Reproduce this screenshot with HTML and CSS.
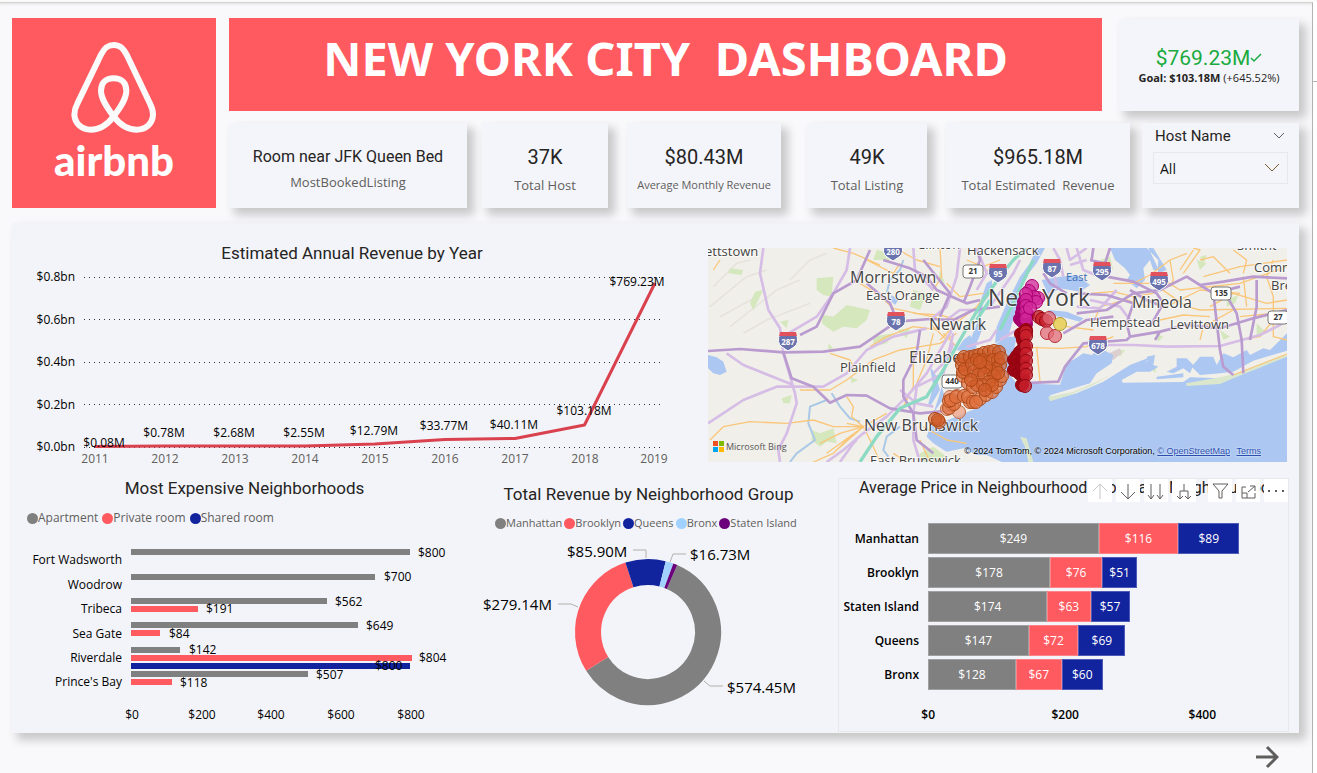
FILE: index.html
```html
<!DOCTYPE html>
<html lang="en">
<head>
<meta charset="utf-8">
<meta name="viewport" content="width=device-width, initial-scale=1">
<title>New York City Dashboard</title>
<link rel="stylesheet" href="styles.css">
</head>
<body>
<div class="frame">
<div class="page">
  <header class="top">
    <div class="brand">
      <svg class="brand-mark" viewBox="210 125 264 280" aria-hidden="true"><path d="M341 139C320 139 311 152 303 168L232 315C224 330 223 342 223 348C225 375 245 393 273 393C300 393 322 378 341 353C362 325 379 300 379 276C379 252 364 239 341 239C318 239 303 252 303 276C303 300 320 325 341 353C360 378 382 393 410 393C438 393 458 375 459 348C459 335 455 325 450 315L380 168C371 152 362 139 341 139Z"/></svg>
      <span class="brand-name">airbnb</span>
    </div>
    <div class="top-main">
      <div class="title-row">
        <h1 class="banner">NEW YORK CITY  DASHBOARD</h1>
        <section class="card goal">
          <p class="goal-value">$769.23M<svg viewBox="0 0 12 10" aria-hidden="true"><path d="M1 5l3 3 7-7"/></svg></p>
          <p class="goal-note"><b>Goal: $103.18M</b> (+645.52%)</p>
        </section>
      </div>
      <div class="kpis">
        <section class="card kpi kpi-text"><p class="kpi-value">Room near JFK Queen Bed</p><p class="kpi-label">MostBookedListing</p></section>
        <section class="card kpi hosts"><p class="kpi-value">37K</p><p class="kpi-label">Total Host</p></section>
        <section class="card kpi monthly"><p class="kpi-value">$80.43M</p><p class="kpi-label">Average Monthly Revenue</p></section>
        <section class="card kpi listings"><p class="kpi-value">49K</p><p class="kpi-label">Total Listing</p></section>
        <section class="card kpi estimated"><p class="kpi-value">$965.18M</p><p class="kpi-label">Total Estimated  Revenue</p></section>
        <section class="card filter">
          <div class="filter-head"><label for="host">Host Name</label><button type="button" class="plain" aria-label="Collapse"><svg width="12" height="8" viewBox="0 0 12 8"><path d="M1 1l5 5 5-5"/></svg></button></div>
          <div class="picker"><select id="host"><option>All</option></select><svg width="16" height="10" viewBox="0 0 16 10" aria-hidden="true"><path d="M1 1l7 7 7-7"/></svg></div>
        </section>
      </div>
    </div>
  </header>

  <main class="card panel">
    <div class="row-one">
      <section class="trend">
        <h2>Estimated Annual Revenue by Year</h2>
        <svg class="chart" viewBox="12 265 696 208" role="img" aria-label="Revenue by year">
          <g class="grid"><path d="M84 277.500H663M84 319.500H663M84 362.500H663M84 404.500H663M84 447.500H663"/></g>
          <path class="line" d="M95 446.500L165 446L235 446L305 446L375 444L445 439.500L515 438.500L584.500 425L655 283"/>
          <g class="lbl end"><text x="75" y="281">$0.8bn</text><text x="75" y="324">$0.6bn</text><text x="75" y="366">$0.4bn</text><text x="75" y="409">$0.2bn</text><text x="75" y="451">$0.0bn</text></g>
          <g class="lbl mid"><text x="104" y="447">$0.08M</text><text x="164" y="437">$0.78M</text><text x="234" y="437">$2.68M</text><text x="304" y="437">$2.55M</text><text x="374" y="435">$12.79M</text><text x="444" y="430">$33.77M</text><text x="514" y="429">$40.11M</text><text x="584" y="415">$103.18M</text><text x="637" y="286">$769.23M</text></g>
          <g class="lbl mid soft"><text x="95" y="463">2011</text><text x="165" y="463">2012</text><text x="235" y="463">2013</text><text x="305" y="463">2014</text><text x="375" y="463">2015</text><text x="445" y="463">2016</text><text x="515" y="463">2017</text><text x="585" y="463">2018</text><text x="654" y="463">2019</text></g>
        </svg>
      </section>
      <section class="map">
        <svg viewBox="0 0 579 214" role="img" aria-label="Map of listings around New York">
          <rect class="land" width="579" height="214"/>
          <g transform="translate(-8 -8) scale(0.33333)">
            <g class="ridge"><path d="M30 200L140 110L200 90M60 230L170 170M90 260L230 150L300 120M40 140L110 70L150 60M130 280L200 240L330 190M270 120L330 60L380 40"/></g>
            <g class="park">
              <path d="M350 115L400 110L395 170L370 165L350 150ZM165 155L190 150L160 210L150 190ZM370 225L400 230L440 195L510 210L500 240L470 265L430 260L400 275L365 250ZM90 85L130 90L125 105L85 100ZM240 245L265 240L260 265ZM335 570L360 580L400 565L410 610L380 605L360 620L335 600ZM245 475L275 465L270 490L250 490ZM640 150L680 160L660 210L630 200ZM520 290L580 280L560 310L520 320ZM590 270L630 265L620 295ZM530 30L570 40L575 60L520 60ZM385 310L400 325L385 330ZM720 90L735 130L715 120ZM660 640L700 620L740 650L700 666L650 666ZM450 410L475 420L455 430ZM700 590L720 600L700 610Z"/>
              <path d="M1200 60L1230 50L1240 90ZM1490 60L1520 70L1500 90ZM1560 270L1590 290L1570 300ZM1670 250L1700 280L1670 285ZM1350 380L1370 380L1365 400ZM1100 370L1120 380L1110 400ZM1580 180L1615 165L1605 190L1580 200ZM1365 280L1390 290L1375 305ZM1170 350L1190 375L1180 400L1165 380ZM1250 330L1275 330L1260 350ZM1500 50L1520 45L1510 75Z"/>
            </g>
            <path class="field" d="M1215 345L1260 325L1265 340L1240 360Z"/>
            <g class="water">
              <path d="M680 590L690 560L720 550L830 505L900 450L905 400L880 350L890 310L920 290L950 290L940 340L925 400L950 430L1080 434L1100 372L1150 340L1175 345L1200 325L1240 345L1235 370L1190 400L1170 430L1050 466L1055 480L1130 460L1210 425L1290 375L1350 352L1320 390L1265 420L1268 428L1450 426L1470 412L1560 415L1610 408L1761 348V666H905L860 645L830 645L790 625L740 635L700 610Z"/>
              <path d="M1500 405L1475 380L1500 350L1540 350L1550 375L1570 340L1600 352L1640 330L1650 345L1690 325L1710 330L1761 280V332L1660 362L1600 395L1560 400ZM1310 395L1345 360L1340 350L1365 345L1360 375L1375 380L1350 395ZM1430 355L1460 355L1480 375L1470 400L1450 385L1420 400L1400 395L1430 380Z"/>
              <path d="M1230 24L1245 60L1275 85L1290 105L1280 120L1310 145L1335 120L1330 85L1350 60L1360 90L1373 90L1375 60L1340 24ZM1360 24L1400 90L1375 100L1372 80L1345 24Z"/>
              <path d="M1025 120L1080 110L1130 105L1170 135L1140 155L1080 145L1045 165Z"/>
              <path d="M1010 24L1035 24L1010 70L970 120L950 200L925 290L885 310L890 260L920 190L960 110L990 70Z"/>
              <path d="M860 130L875 120L880 150L850 190L840 230L850 260L830 310L810 330L815 290L835 240L835 200ZM770 330L790 300L810 285L830 320L820 340ZM24 345L50 352L70 365L80 395L60 405L40 400L24 385Z"/>
              <path d="M575 165L595 180L585 195L570 180ZM895 500L870 470L910 440L970 440L980 500ZM690 500L720 450L705 400L690 380L700 440L685 490ZM725 440L735 470L700 520L715 475ZM1045 210L1100 215L1150 235L1140 245L1090 232L1045 225ZM1370 410L1450 400L1450 412L1370 418Z"/>
            </g>
            <g class="sand"><path d="M1045 470L1120 455L1190 425L1240 400L1180 435L1110 465L1050 484ZM1458 430L1560 412L1610 400L1750 345L1761 350L1600 415L1560 432L1460 438ZM960 590L980 595L990 630L1000 666H985L975 620Z"/></g>
            <g class="river"><path d="M395 460L420 500L450 535L480 545M380 480L330 500L325 550L345 600L290 640L270 666M600 560L560 590L550 630L565 650M610 60L600 90L570 120L560 160"/></g>
            <g class="minor"><path d="M30 600L70 560L150 545L260 550L340 540L400 560L490 560L440 600L400 640L340 666M40 90L60 60M500 60L580 100L600 70M585 24L650 60L720 80M300 450L390 450L440 420L520 360L600 330L720 310L770 280M440 470L460 500L455 530L490 560L520 620L540 666M400 24L460 40L540 75M480 130L530 160L580 205L650 220L720 235M510 320L560 290L640 260L720 270M490 560L420 580L360 610M490 560L410 630M490 560L380 640M490 560L440 550M720 300L750 270L770 240M640 330L640 440L610 500M560 520L490 560M720 24L725 110L700 150M390 340L450 360L470 400"/>
            <path d="M690 250L740 300L760 260M700 280L680 360L650 430M730 280L770 320M640 220L720 225L790 245M670 560L740 600L800 610M660 600L690 666M580 640L620 666M800 60L850 80L900 60M740 130L780 170L850 160M900 110L860 90M780 240L830 200L870 150"/>
            <path d="M980 322L1080 325L1160 320L1240 290M1010 320L1020 425M1050 230L1100 260L1180 270M1240 130L1360 130L1460 200L1500 210L1760 205M1360 100L1440 150L1620 130L1761 80M1450 100L1500 30L1480 24M1630 100L1640 60L1600 30M1720 60L1700 110L1720 170L1720 290L1761 300M1400 200L1500 150L1620 160M1500 300L1510 260L1600 210M1600 405L1761 342M1180 250L1200 200L1280 180L1340 200M1410 60L1420 120L1410 140"/>
            <path d="M1170 160L1240 155L1300 170L1360 160M1300 130L1350 105L1410 60L1461 40M1500 60L1540 50L1590 100M1440 90L1480 30M1510 110L1620 80L1761 60M1530 200L1600 160L1700 190L1761 180M1630 110L1640 200M1380 240L1450 225L1530 230M1620 230L1720 220M1620 300L1680 290L1720 240"/></g>
            <g class="pale"><path d="M190 24L180 100L205 210L240 265L250 340L285 460L290 490L260 580L235 630L240 666M24 550L130 480L230 440L370 440L440 400L500 330L580 290L680 265M80 340L130 375L280 435M450 24L440 90L400 160L350 230L265 280M380 666L430 630L490 580L560 530L620 470L680 400L750 280L770 240M780 24L770 110L740 200L690 240M640 24L645 90L700 150M760 280L730 400L650 440L640 520L640 600L660 666M890 270L870 300L800 320"/>
            <path d="M600 450L650 490L700 500M700 400L740 360L760 310M740 240L780 210L820 210M830 24L860 100L830 150M420 666L460 610L470 600M900 300L950 270M960 60L940 100L870 200"/>
            <path d="M1210 315L1300 315L1400 320L1560 318L1680 285L1740 255L1761 240M1130 200L1200 205L1250 150M1100 24L1110 60L1160 24M1030 60L1060 90L1070 140L1030 180M1110 75L1160 60M1060 24L1080 60L1090 110M1130 24L1150 90L1200 110M1170 180L1260 200L1290 240"/></g>
            <g class="major"><path d="M24 333L120 327L250 337L370 335L480 320L590 245L690 237L760 240L820 210L900 200M250 337L275 415L340 440L390 488L440 465L500 467L570 505L660 520L760 510M300 285L350 260L400 160L470 120L510 30M550 60L630 85L680 110L710 150L800 190L840 180M660 270L650 340L610 420L610 470L640 520L650 600L700 640M500 130L570 190L590 240M790 190L810 140L840 60L830 24M670 60L750 160L720 230"/>
            <path d="M960 430L1075 425L1095 380L1150 310L1280 300L1290 290L1380 275L1460 255L1560 265L1660 235L1761 210M1130 160L1220 165L1300 190L1280 250L1290 290M1130 220L1220 210L1300 160L1380 150L1460 110L1500 135L1570 125L1660 110L1761 115M1380 275L1365 300M1290 150L1340 180L1390 200M1230 24L1215 70L1170 60M1500 135L1540 160L1560 330L1570 380L1600 405M1570 150L1610 220L1625 300L1630 400M1540 160L1620 140M1670 120L1670 200L1650 300M1220 110L1300 125L1370 160L1390 190L1350 260M1090 280L1160 240L1240 230M1100 160L1050 130L1030 100M1180 24L1175 60"/></g>
            <g class="pike"><path d="M480 666L530 590L600 505L680 470L730 390L780 300L850 180L900 110L940 60L980 24M900 270L930 210L1000 60M830 240L870 180"/></g>
          </g>
          <g id="shields" class="shields"></g>
          <g class="place"><text x="-3" y="8">ettstown</text><text x="209" y="1">Clinton</text><text x="259" y="7">Hackensack</text><text x="529" y="2">Smitht</text><text x="546" y="24">Comm</text><text x="563" y="42">Bre</text><text x="158" y="52">East Orange</text><text x="132" y="124">Plainfield</text><text x="382" y="79">Hempstead</text><text x="462" y="81">Levittown</text><text x="162" y="217">East Brunswick</text></g>
          <g class="place town"><text x="142" y="35">Morristown</text><text x="221" y="82">Newark</text><text x="201" y="115">Elizabeth</text><text x="424" y="60">Mineola</text><text x="156" y="183">New Brunswick</text></g>
          <text class="city" x="280" y="58">New York</text>
          <text class="blue" x="358" y="33">East</text>
          <g id="dots"></g>
          <path fill="#f25022" d="M5 193h5v5H5z"/><path fill="#7fba00" d="M11 193h5v5h-5z"/><path fill="#00a4ef" d="M5 199h5v5H5z"/><path fill="#ffb900" d="M11 199h5v5h-5z"/>
          <text class="bing" x="18" y="202">Microsoft Bing</text>
        </svg>
        <p class="credits">© 2024 TomTom, © 2024 Microsoft Corporation, <a href="#osm">© OpenStreetMap</a> <a href="#terms">Terms</a></p>
      </section>
    </div>

    <div class="row-two">
      <section class="expensive">
        <h2>Most Expensive Neighborhoods</h2>
        <ul class="legend"><li class="gray">Apartment</li><li class="red">Private room</li><li class="navy">Shared room</li></ul>
        <svg class="chart" viewBox="12 530 453 203" role="img" aria-label="Price by neighborhood">
          <g class="bar-gray"><rect x="131" y="549" width="279" height="6"/><rect x="131" y="574" width="244" height="6"/><rect x="131" y="598" width="196" height="6"/><rect x="131" y="622" width="227" height="6"/><rect x="131" y="647" width="49" height="6"/><rect x="131" y="671" width="177" height="6"/></g>
          <g class="bar-red"><rect x="131" y="606" width="67" height="6"/><rect x="131" y="630" width="29" height="6"/><rect x="131" y="655" width="281" height="6"/><rect x="131" y="679" width="41" height="6"/></g>
          <g class="bar-navy"><rect x="131" y="663" width="279" height="6"/></g>
          <g class="lbl end"><text x="122" y="564">Fort Wadsworth</text><text x="122" y="589">Woodrow</text><text x="122" y="613">Tribeca</text><text x="122" y="638">Sea Gate</text><text x="122" y="662">Riverdale</text><text x="122" y="686">Prince's Bay</text></g>
          <g class="lbl"><text x="418" y="557">$800</text><text x="384" y="581">$700</text><text x="335" y="606">$562</text><text x="206" y="613">$191</text><text x="366" y="630">$649</text><text x="169" y="638">$84</text><text x="189" y="654">$142</text><text x="419" y="662">$804</text><text x="375" y="670">$800</text><text x="316" y="679">$507</text><text x="180" y="687">$118</text></g>
          <g class="lbl mid"><text x="132" y="719">$0</text><text x="202" y="719">$200</text><text x="271" y="719">$400</text><text x="341" y="719">$600</text><text x="411" y="719">$800</text></g>
        </svg>
      </section>

      <section class="share">
        <h2>Total Revenue by Neighborhood Group</h2>
        <ul class="legend small"><li class="gray">Manhattan</li><li class="red">Brooklyn</li><li class="navy">Queens</li><li class="sky">Bronx</li><li class="purple">Staten Island</li></ul>
        <svg class="chart" viewBox="465 533 373 200" role="img" aria-label="Revenue share by neighborhood group">
          <g class="ring" transform="rotate(-66.400 648 632)">
            <circle class="s-gray" cx="648" cy="632" r="60" pathLength="1000" stroke-dasharray="595.200 1000"/>
            <circle class="s-red" cx="648" cy="632" r="60" pathLength="1000" stroke-dasharray="289.200 1000" stroke-dashoffset="-595.200"/>
            <circle class="s-navy" cx="648" cy="632" r="60" pathLength="1000" stroke-dasharray="89 1000" stroke-dashoffset="-884.400"/>
            <circle class="s-sky" cx="648" cy="632" r="60" pathLength="1000" stroke-dasharray="17.300 1000" stroke-dashoffset="-973.400"/>
            <circle class="s-purple" cx="648" cy="632" r="60" pathLength="1000" stroke-dasharray="9.300 1000" stroke-dashoffset="-990.700"/>
          </g>
          <path class="leader" d="M633 550H646V558M670 562L673 554H686M558 604H571L578 607M704 681L710 686H723"/>
          <g class="lbl big"><text x="567" y="557">$85.90M</text><text x="690" y="560">$16.73M</text><text x="483" y="610">$279.14M</text><text x="727" y="693">$574.45M</text></g>
        </svg>
      </section>

      <section class="average">
        <h2>Average Price in Neighbourhood Group and Neighbourhood</h2>
        <div class="tools">
          <button type="button" class="faded" aria-label="Drill up"><svg viewBox="0 0 24 24"><path d="M12 20V5M5 12l7-7 7 7"/></svg></button>
          <button type="button" aria-label="Drill down"><svg viewBox="0 0 24 24"><path d="M12 5v15M5 13l7 7 7-7"/></svg></button>
          <button type="button" aria-label="Next level"><svg viewBox="0 0 24 24"><path d="M7 5v15M4 16l3 4 3-4M16 5v15M13 16l3 4 3-4"/></svg></button>
          <button type="button" aria-label="Expand all"><svg viewBox="0 0 24 24"><path d="M12 5v7M8 20v-8h8v8M5 17l3 3 3-3M13 17l3 3 3-3"/></svg></button>
          <button type="button" class="filter-tool" aria-label="Filters"><svg viewBox="0 0 24 24"><path d="M5 5h15l-6 7v7h-3v-7z"/></svg></button>
          <button type="button" aria-label="Focus mode"><svg viewBox="0 0 24 24"><path d="M10 8H6v4M6 12v7h13v-5M6 14h5v5M12 13l7-6M14 7h5v5"/></svg></button>
          <button type="button" aria-label="More options"><svg class="dots" viewBox="0 0 24 24"><path d="M4 11h2v2H4zM11 11h2v2h-2zM18 11h2v2h-2z"/></svg></button>
        </div>
        <div class="stack">
          <span class="name">Manhattan</span><div class="track"><i class="gray" style="--v:249">$249</i><i class="red" style="--v:116">$116</i><i class="navy" style="--v:89">$89</i></div>
          <span class="name">Brooklyn</span><div class="track"><i class="gray" style="--v:178">$178</i><i class="red" style="--v:76">$76</i><i class="navy" style="--v:51">$51</i></div>
          <span class="name">Staten Island</span><div class="track"><i class="gray" style="--v:174">$174</i><i class="red" style="--v:63">$63</i><i class="navy" style="--v:57">$57</i></div>
          <span class="name">Queens</span><div class="track"><i class="gray" style="--v:147">$147</i><i class="red" style="--v:72">$72</i><i class="navy" style="--v:69">$69</i></div>
          <span class="name">Bronx</span><div class="track"><i class="gray" style="--v:128">$128</i><i class="red" style="--v:67">$67</i><i class="navy" style="--v:60">$60</i></div>
          <div class="axis"><span>$0</span><span>$200</span><span>$400</span></div>
        </div>
      </section>
    </div>
  </main>

  <footer class="foot"><button type="button" class="plain" aria-label="Next page"><svg width="24" height="24" viewBox="0 0 24 24"><path d="M1 12h20M12 2l10 10-10 10"/></svg></button></footer>
</div>
<div class="gutter"></div>
</div>
<script src="map.js"></script>
</body>
</html>
```

FILE: styles.css
```css
* { box-sizing: border-box; }
body { margin: 0; background: #fff; color: #252423; font-family: "Open Sans", "Noto Sans", sans-serif; font-size: 12px; }
h1, h2, p, ul { margin: 0; padding: 0; }
svg { display: block; }
h2 { font: 400 17px/24px Roboto, sans-serif; text-align: center; white-space: nowrap; }
.frame { display: grid; grid-template-columns: 1fr 4px; border-top: 2px solid #fafafa; }
.page { background: #f9f9fb; border-top: 1px solid #d2d2d2; border-right: 1px solid #b4b4b4; padding: 15px 13px 0 12px; box-shadow: inset 0 3px 3px -2px #ddd; }
.gutter { background: linear-gradient(#b4b4b4, #b4b4b4) 0 79px / 100% 1px no-repeat #fff; }
.card { background: #f4f5fa; box-shadow: 6px 6px 9px 1px rgba(0, 0, 0, .2); }
.plain { border: 0; padding: 0; background: none; }

.top { display: grid; grid-template-columns: 204px 1fr; gap: 13px; }
.brand { background: #ff5a60; display: flex; flex-direction: column; align-items: center; justify-content: center; color: #fff; }
.brand-mark { width: 88px; height: 94px; fill: none; stroke: #fafafa; stroke-width: 18; }
.brand-name { font: 900 42px/52px Lato, sans-serif; }
.top-main { display: grid; gap: 12px; }
.title-row { display: grid; grid-template-columns: 873fr 180fr; gap: 17px; height: 93px; }
.banner { background: #ff5a60; color: #fff; font: 700 47px/80px "Noto Sans", sans-serif; text-align: center; white-space: pre; overflow: hidden; }
.goal { text-align: center; margin-top: 1px; padding-top: 24px; }
.goal-value { display: flex; justify-content: center; align-items: center; color: #1aab40; font: 400 21px/30px Roboto, sans-serif; }
.goal-value svg { width: 12px; height: 10px; fill: none; stroke: #1aab40; stroke-width: 1.5; }
.goal-note { font-size: 11px; line-height: 10px; white-space: nowrap; }
.kpis { display: grid; grid-template-columns: 238fr 129fr 161fr 134fr 191fr 157fr; gap: 12px; height: 85px; }
.kpi { text-align: center; white-space: pre; padding-top: 20px; }
.kpi-value { font: 400 20px/28px Roboto, sans-serif; }
.kpi-label { color: #605e5c; font-size: 13px; line-height: 28px; }
.kpi-text .kpi-value { font-size: 16px; }
.kpi-text .kpi-label { line-height: 22px; }
.hosts { margin-left: 3px; }
.monthly, .estimated { margin-left: 7px; }
.monthly .kpi-label { font-size: 11px; }
.listings { margin-left: 14px; }
.filter { padding: 3px 11px 0; }
.filter-head { display: flex; justify-content: space-between; align-items: center; padding: 0 3px 0 2px; font: 400 15px/20px Roboto, sans-serif; }
.filter svg { fill: none; stroke: #605e5c; }
.picker { display: grid; grid-template-columns: 1fr 16px; align-items: center; margin-top: 6px; }
.picker select { grid-area: 1 / 1 / 2 / 3; appearance: none; width: 100%; height: 32px; border: 1px solid #e8e8ec; border-radius: 0; background: none; padding: 0 6px; color: #111; font: 400 14px "Open Sans", sans-serif; }
.picker svg { grid-area: 1 / 2; margin-left: -8px; stroke: #7a5c28; pointer-events: none; }

.panel { margin-top: 15px; background: #f3f4f9; }
.row-one { display: grid; grid-template-columns: 696fr 579fr; padding-right: 12px; }
.trend { padding-top: 18px; }
.trend h2 { padding-right: 16px; }
.chart { width: 100%; height: auto; overflow: visible; }
.lbl { font-size: 12px; fill: #000; }
.big { font-size: 15px; }
.soft { fill: #605e5c; }
.mid { text-anchor: middle; }
.end { text-anchor: end; }
.grid { stroke: #333; stroke-dasharray: 1 4; }
.line { fill: none; stroke: #d9414e; stroke-width: 3; stroke-linejoin: round; }

.map { position: relative; margin-top: 25px; align-self: start; }
.map > svg { width: 100%; height: auto; overflow: hidden; }
.land { fill: #f1efea; }
.park { fill: #d5e7bd; }
.field { fill: #dccfd0; }
.water { fill: #acc7f1; }
.sand { fill: #dbe7cd; }
.ridge, .river, .minor, .pale, .major, .pike { fill: none; stroke-linejoin: round; }
.ridge { stroke: #e6e3dd; stroke-width: 5; }
.river { stroke: #a9c9e6; stroke-width: 6; }
.minor { stroke: #f9c67a; stroke-width: 4; }
.pale { stroke: #d6bde6; stroke-width: 8; }
.major { stroke: #b99bcf; stroke-width: 8; }
.pike { stroke: #8cd9c4; stroke-width: 10; }
.place, .city { fill: #444; stroke: #fff; stroke-width: 2px; stroke-opacity: .7; paint-order: stroke; font-size: 13px; font-weight: 500; }
.town { font-size: 16px; }
.city { font-size: 23px; }
.blue { fill: #3b6db5; font-size: 11px; }
.bing { fill: #555; font-size: 9px; }
.shield-num { fill: #fff; font: 700 8px "Open Sans", sans-serif; text-anchor: middle; }
.plate-num { fill: #333; font: 700 8px "Open Sans", sans-serif; text-anchor: middle; }
.plate { fill: #fff; stroke: #777; }
.shield { fill: #6b73ae; stroke: #fff; }
.shield-top { fill: #e1525c; }
.dot-orange { fill: #e0703f; fill-opacity: .7; stroke: #b04c1c; }
.dot-rust { fill: #cf5a28; fill-opacity: .65; stroke: #ad4815; }
.dot-peach { fill: #eda184; fill-opacity: .75; stroke: #c06a45; }
.dot-magenta { fill: #d32a9b; fill-opacity: .75; stroke: #a8006f; }
.dot-plum { fill: #ab0070; stroke: #a0006a; }
.dot-crimson { fill: #c9202d; fill-opacity: .8; stroke: #8f0612; }
.dot-blood { fill: #9c0512; stroke: #930310; }
.dot-rose { fill: #e36c78; fill-opacity: .75; stroke: #b52c38; }
.dot-gold { fill: #e8d05e; fill-opacity: .9; stroke: #b09a34; }
.credits { position: absolute; right: 26px; bottom: 4px; font: 400 9px/14px "Liberation Sans", Arial, sans-serif; color: #000; white-space: nowrap; text-shadow: 0 0 2px #fff; }
.credits a { color: #2c4fae; }
.credits a + a { margin-left: 4px; }

.row-two { display: grid; grid-template-columns: 453fr 373fr 451fr; padding-right: 10px; }
.expensive { padding-top: 3px; }
.expensive h2 { padding-left: 12px; }
.share { padding-top: 9px; }
.share h2 { padding-right: 6px; }
.legend { display: flex; list-style: none; gap: 4px; margin-top: 8px; padding-left: 15px; line-height: 20px; margin-bottom: 2px; color: #605e5c; white-space: nowrap; }
.legend li { display: flex; align-items: center; }
.legend li::before { content: ""; width: 11px; height: 11px; border-radius: 50%; background: currentColor; }
.legend .gray::before { background: #808080; }
.legend .red::before { background: #ff5a60; }
.legend .navy::before { background: #12239e; }
.legend .sky::before { background: #a0d1ff; }
.legend .purple::before { background: #6b007b; }
.legend.small { font-size: 11px; gap: 2px; padding-left: 30px; margin-top: 7px; margin-bottom: 0; }
.bar-gray { fill: #808080; }
.bar-red { fill: #ff5a60; }
.bar-navy { fill: #12239e; }
.ring { fill: none; stroke-width: 26; }
.s-gray { stroke: #808080; }
.s-red { stroke: #ff5a60; }
.s-navy { stroke: #12239e; }
.s-sky { stroke: #a0d1ff; }
.s-purple { stroke: #6b007b; }
.leader { fill: none; stroke: #b3b0ad; }

.average { position: relative; margin-top: 5px; margin-bottom: 1px; border: 1px solid #e8e8ec; overflow: hidden; }
.average h2 { text-align: left; padding-left: 20px; font-size: 16px; line-height: 18px; }
.tools { position: absolute; top: 0; right: 0; display: flex; gap: 4px; }
.tools button { width: 24px; height: 23px; padding: 0; border: 0; background: #fff; }
.tools svg { width: 24px; height: 24px; fill: none; stroke: #605e5c; }
.tools .faded svg { stroke: #c8c6c4; }
.tools .filter-tool { margin-left: 8px; }
.tools .dots { fill: #605e5c; stroke: none; }
.stack { display: grid; grid-template-columns: 80px 1fr; column-gap: 9px; row-gap: 3px; padding-top: 26px; align-items: center; font-weight: 600; color: #000; }
.name { text-align: right; white-space: nowrap; }
.track { display: flex; height: 31px; }
.track i { width: calc(var(--v) / 525 * 100%); border: 1px solid rgba(255, 255, 255, .25); color: #fff; font-style: normal; font-weight: 400; line-height: 29px; text-align: center; }
.track .gray { background: #808080; }
.track .red { background: #ff5a60; }
.track .navy { background: #12239e; }
.axis { grid-column: 2; display: flex; margin: 13px 0 0 -19%; line-height: 18px; }
.axis span { width: 32%; text-align: center; }

.foot { display: flex; justify-content: flex-end; padding: 12px 20px 4px 0; height: 40px; }
.foot svg { fill: none; stroke: #605e5c; stroke-width: 3; }
```

FILE: map.js
```js
const NS = "http://www.w3.org/2000/svg";

function add(parent, tag, attrs, text) {
  const el = document.createElementNS(NS, tag);
  for (const key in attrs) el.setAttribute(key, attrs[key]);
  if (text) el.textContent = text;
  parent.appendChild(el);
}

const shields = document.getElementById("shields");
[["280", 185, 3], ["95", 290, 25], ["287", 80, 93], ["78", 188, 73], ["87", 344, 20], ["295", 394, 23], ["495", 451, 33], ["678", 390, 97]].forEach(([n, x, y]) => {
  add(shields, "path", { class: "shield", d: `M${x - 8} ${y - 8}h16q4 10-2 14l-6 4-6-4q-6-4-2-14z` });
  add(shields, "path", { class: "shield-top", d: `M${x - 8} ${y - 9}h16l1 4h-18z` });
  add(shields, "text", { class: "shield-num", x, y: y + 4 }, n);
});
[["21", 265, 23], ["440", 244, 133], ["135", 513, 45], ["27", 570, 69]].forEach(([n, x, y]) => {
  add(shields, "rect", { class: "plate", x: x - 10, y: y - 6, width: 20, height: 13, rx: 3 });
  add(shields, "text", { class: "plate-num", x, y: y + 3 }, n);
});

const listings = {
  peach: [251, 164, 242, 149, 249, 148, 239, 161, 244, 157],
  orange: [241, 160, 246, 156, 241, 153, 243, 152, 248, 149, 256, 148, 262, 154, 260, 149, 265, 154, 272, 151, 268, 154, 278, 147, 284, 144, 288, 139, 292, 132, 294, 128, 255, 128, 260, 135, 265, 139, 231, 174],
  rust: [227, 171, 230, 172, 254, 117, 254, 112, 256, 109, 262, 109, 267, 108, 271, 107, 276, 105, 281, 104, 286, 103, 291, 104, 255, 124, 257, 121, 264, 116, 269, 112, 275, 112, 280, 114, 285, 112, 290, 112, 292, 117, 288, 121, 283, 123, 278, 119, 272, 122, 266, 123, 270, 127, 276, 126, 286, 128, 290, 125, 281, 134, 275, 137, 269, 137, 263, 132, 284, 137, 293, 110, 277, 142, 272, 114],
  plum: [316, 54, 315, 60, 314, 65, 312, 71, 314, 73, 317, 69, 318, 76, 320, 67],
  magenta: [324, 38, 321, 43, 330, 50, 326, 49, 328, 54, 318, 46, 318, 52, 318, 58, 318, 64, 318, 71, 322, 60],
  blood: [313, 86, 315, 92, 318, 82, 316, 99, 312, 104, 309, 108, 306, 112, 308, 118, 306, 122, 311, 125, 315, 112, 314, 119, 315, 129, 314, 137],
  crimson: [318, 84, 318, 88, 318, 98, 318, 106, 318, 113, 318, 121, 318, 127, 317, 138, 331, 69, 334, 71, 338, 73],
  rose: [341, 70, 339, 85, 347, 88],
  gold: [352, 76]
};
const dots = document.getElementById("dots");
for (const kind in listings) {
  const p = listings[kind];
  for (let i = 0; i < p.length; i += 2) {
    add(dots, "circle", { class: "dot-" + kind, cx: p[i], cy: p[i + 1], r: 6.5 });
  }
}
```
